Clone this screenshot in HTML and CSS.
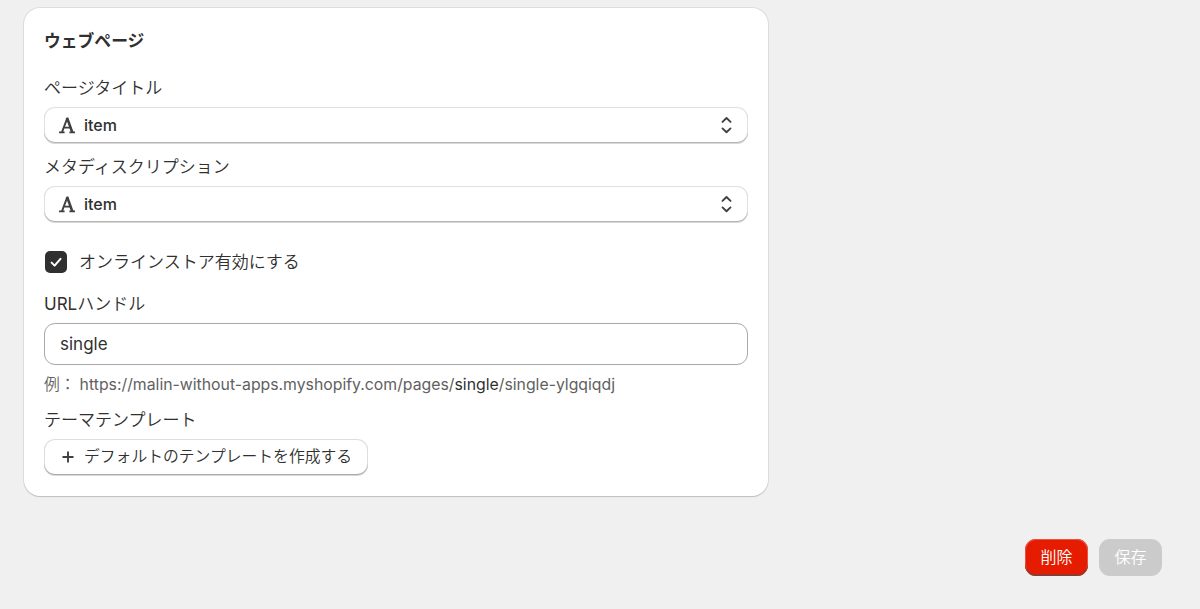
FILE: index.html
```html
<!DOCTYPE html>
<html lang="ja">
<head>
  <meta charset="UTF-8" />
  <meta name="viewport" content="width=device-width, initial-scale=1.0"/>
  <title>ウェブページ</title>
  <link rel="stylesheet" href="styles.css">
</head>
<body>
  <main class="card">
    <h2>ウェブページ</h2>

    <div class="field title-field">
      <span class="label">ページタイトル</span>
      <button type="button" class="select">
        <svg class="icon-text" width="18" height="18" viewBox="0 0 18 18"><path d="M4 16.2 9.1 2.6M5.8 11.6h6.8M1 16.4h5.6M11.4 16.4H17"/><path class="thick" d="M9 1.6l5.3 14.8"/></svg>
        <span>item</span>
        <svg class="icon-arrows" width="14" height="18" viewBox="0 0 14 18"><path d="M2.5 5.9 6.5 2l4 3.9M2.5 12.4l4 3.9 4-3.9"/></svg>
      </button>
    </div>

    <div class="field meta-field">
      <span class="label">メタディスクリプション</span>
      <button type="button" class="select">
        <svg class="icon-text" width="18" height="18" viewBox="0 0 18 18"><path d="M4 16.2 9.1 2.6M5.8 11.6h6.8M1 16.4h5.6M11.4 16.4H17"/><path class="thick" d="M9 1.6l5.3 14.8"/></svg>
        <span>item</span>
        <svg class="icon-arrows" width="14" height="18" viewBox="0 0 14 18"><path d="M2.5 5.9 6.5 2l4 3.9M2.5 12.4l4 3.9 4-3.9"/></svg>
      </button>
    </div>

    <div class="check-row">
      <span class="checkbox" role="checkbox" aria-checked="true">
        <svg width="22" height="22" viewBox="0 0 22 22"><path d="M6.6 11.6l3 3 5.9-6.8"/></svg>
      </span>
      <span class="label">オンラインストア有効にする</span>
    </div>

    <div class="field url-field">
      <label class="label" for="handle"><span class="latin">URL</span>ハンドル</label>
      <input type="text" id="handle" value="single">
      <p class="help"><span class="example">例：</span>https://malin-without-apps.myshopify.com/pages/<b>single</b>/single-ylgqiqdj</p>
    </div>

    <div class="field template-field">
      <span class="label">テーマテンプレート</span>
      <button type="button" class="create">
        <svg width="12" height="12" viewBox="0 0 12 12"><path d="M6 1.2v9.6M1.2 6h9.6"/></svg>
        <span>デフォルトのテンプレートを作成する</span>
      </button>
    </div>
  </main>

  <div class="actions">
    <button type="button" class="delete">削除</button>
    <button type="button" class="save" disabled>保存</button>
  </div>
</body>
</html>
```

FILE: styles.css
```css
* { margin: 0; padding: 0; box-sizing: border-box; }
body { font-family: Inter, "Noto Sans CJK JP", sans-serif; background: #f0f0f0; color: #303030; padding: 8px 38px 0 24px; font-size: 17px; line-height: 24px; overflow: hidden; }
button, input { font: inherit; color: inherit; border: none; outline: none; }
svg { display: block; fill: none; stroke: #404040; stroke-linecap: round; stroke-linejoin: round; }

.card { width: 744px; height: 488px; padding: 21px 20px 20px; background: #fff; border-radius: 16px; box-shadow: 0 1px 1px #c0c0c0, 0 0 0 1px #dedede; }
h2 { font-size: 16.8px; font-weight: 700; line-height: 24px; }
.label { display: block; font-weight: 350; }
.latin { font-weight: 400; }
.field { display: flex; flex-direction: column; align-items: flex-start; gap: 7px; }
.title-field { margin-top: 23px; }
.meta-field { margin-top: 12px; }
.url-field { margin-top: 18px; }
.template-field { margin-top: 12px; }

.select { width: 100%; height: 36px; padding: 0 14px; display: flex; align-items: center; gap: 8px; background: #fff; border-radius: 11px; box-shadow: inset 0 -1px 0 #b5b5b5, inset 0 0 0 1px #e0e0e0, 0 1px 0 #d8d8d8; font-size: 16px; font-weight: 500; }
.icon-text { stroke-width: 1.9; stroke-linecap: butt; }
.icon-text .thick { stroke-width: 2.6; }
.icon-arrows { margin-left: auto; stroke-width: 1.9; }

.check-row { display: flex; align-items: center; gap: 12px; height: 24px; margin-top: 28px; padding-left: 1px; }
.checkbox { width: 22px; height: 22px; border-radius: 5px; background: #303030; }
.checkbox svg { stroke: #fff; stroke-width: 2; }

input { width: 100%; height: 42px; padding: 0 15px; background: #fff; border: 1px solid #a8a8a8; border-radius: 11px; font-size: 17px; }
.help { padding-top: 1px; margin-bottom: -1px; font-size: 15.8px; color: #616161; white-space: nowrap; }
.help b { font-weight: 400; color: #303030; }
.example { margin-right: 4px; font-weight: 350; }

.create { height: 36px; padding: 0 16px 0 18px; display: flex; align-items: center; gap: 10px; background: #fff; border-radius: 11px; box-shadow: inset 0 -1px 0 #ababab, inset 0 0 0 1px #dedede, 0 1px 0 #d8d8d8; font-size: 15.8px; font-weight: 350; }
.create svg { stroke-width: 1.9; }

.actions { display: flex; justify-content: flex-end; gap: 11px; margin-top: 43px; }
.actions button { width: 63px; height: 37px; padding-bottom: 1px; border-radius: 11px; font-size: 16px; font-weight: 350; color: #fff; }
.delete { background: #e51c00; box-shadow: inset 0 -2px 0 #8f3a30, inset 0 0 0 1px #ee5140; }
.save { background: #cbcbcb; }
```
